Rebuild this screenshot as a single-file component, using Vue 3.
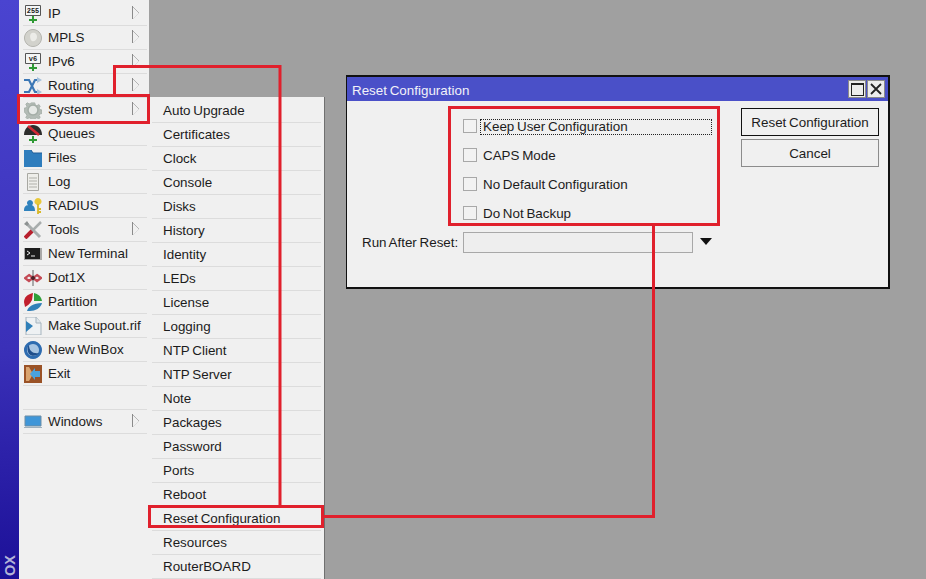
<script setup>
const p = (d, fill = 'none', stroke = 'none', sw = 1) => ({ tag: 'path', attrs: { d, fill, stroke, 'stroke-width': sw } })
const t = (text, x, y) => ({ tag: 'text', text, attrs: { x, y, 'font-size': 7, 'font-weight': 700, 'font-family': 'Liberation Mono, monospace', fill: '#222', 'text-anchor': 'middle' } })
const plus = [p('M9 11v7M5 15h8', 'none', '#2f9a35', 2)]
const monitor = [p('M1.5 .5h15v10h-15z', '#f4f6f6', '#555')]
const gear = 'M7 1h4l.5 2.4 1.8.8 2.2-1.3 1.6 1.6-1.3 2.2.8 1.8 2.4.5v3.9l-2.4.6-.8 1.8 1.3 2-1.6 1.6-2.2-1.2-1.8.7-.5 2.1H7l-.5-2.1-1.8-.7-2.2 1.2-1.6-1.6 1.3-2-.8-1.8L-1 11V7l2.4-.5.8-1.8L.9 2.5l1.6-1.6 2.2 1.3 1.8-.8z'

const menu = [
  { label: 'IP', sub: true, icon: [...monitor, t('255', 9, 8), ...plus] },
  { label: 'MPLS', sub: true, icon: [p('M9 .5a8.500 8.500 0 1 1-.01 0z', '#d2d2cc', '#b4b4ae'), p('M8 4c3-1 5 1 5 4s-3 5-5 4-3-7 0-8z', '#ecece8')] },
  { label: 'IPv6', sub: true, icon: [...monitor, t('v6', 9, 8), ...plus] },
  { label: 'Routing', sub: true, icon: [p('M0 3h5l6 12h3M0 15h5l6-12h3', 'none', '#3b77b5', 2.2), p('M13 0l5 3-5 3zM13 12l5 3-5 3z', '#a6c2dc')] },
  { label: 'System', sub: true, icon: [{ tag: 'g', attrs: { transform: 'translate(1 1) scale(.89)' }, kids: [p(gear, '#b4bcb6', '#a4aea7')] }, p('M9 4a5 5 0 1 1-.01 0z', '#e6e9e6', '#a4aea7', 1.5)] },
  { label: 'Queues', icon: [p('M0 10C0 4 4 0 9 0s9 4 9 10z', '#2c2c2c'), p('M4 1l11 9', 'none', '#d32a35', 2.6), p('M9 11v7M5 15h8', 'none', '#2f9a35', 2)] },
  { label: 'Files', icon: [p('M0 1h7l2 3h9v14H0z', '#2e7dbd'), p('M7 1l2 3h9', 'none', '#1f5f99')] },
  { label: 'Log', icon: [p('M3.500 .5h11v17h-11z', '#eeeeea', '#a8a8a2'), p('M5 5h8M5 8h8M5 11h8M5 14h8', 'none', '#b0b0aa')] },
  { label: 'RADIUS', icon: [p('M6 3a3 3 0 1 1-.01 0zM0 14c0-5 2-6 5.500-6s5.500 1 5.500 6z', '#2f82bd'), p('M14 1a3.500 3.500 0 1 1-.01 0z', '#e8c838'), p('M14 7v10M14 12h3M14 15h3', 'none', '#d8b828', 1.8)] },
  { label: 'Tools', sub: true, icon: [p('M2 2l14 14', 'none', '#a8adad', 3), p('M17 1L7 11', 'none', '#a8adad', 2.5), p('M8 10L1 17', 'none', '#b8202e', 4), p('M0 3l3-3 2 3-2 2z', '#8d9292')] },
  { label: 'New Terminal', icon: [p('M0 3h18v12H0z', '#a9a9a9'), p('M1 3h15v11H1z', '#1d1d1d'), p('M3 6l3 2-3 2M7 11h4', 'none', '#eee', 1)] },
  { label: 'Dot1X', icon: [p('M9 1v16', 'none', '#8a8a8a', 1.4), p('M5 6l4 3-4 3-4-3zM13 6l4 3-4 3-4-3z', 'none', '#c44a55', 2.2), p('M9 6.500l2.500 2.500-2.500 2.500-2.500-2.500z', '#4a2228')] },
  { label: 'Partition', icon: [p('M0 9C0 4 4 1 9 0L8 7C6 11 3 13 1 14z', '#c11f2c'), p('M10 0c4 1 7 3 8 8h-8z', '#31a03a'), p('M18 10c-1 5-7 8-12 8H3c1-4 6-8 15-8z', '#2f7fb8')] },
  { label: 'Make Supout.rif', icon: [p('M2 0h10l5 6v12H2z', '#eef1f3', '#a5b3bd'), p('M2 4l7 5-7 6z', '#2f7fb8'), p('M12 0v6h5', '#dfe6ea', '#a5b3bd')] },
  { label: 'New WinBox', icon: [p('M9 0a9 9 0 1 1-.01 0z', '#2e6cb0'), p('M9 3a6 6 0 1 1-.01 0z', '#a8c5e2'), p('M5 4c0 6 4 9 10 8-2 3-7 4-10 1-2-3-2-7 0-9z', '#1f4f8c')] },
  { label: 'Exit', icon: [p('M0 0h18v18H0z', '#9a5226'), p('M2 2l5 7-5 7M2 2h3l4 7-4 7H2', '#d9a36e'), p('M16 6H11V3L6 9l5 6v-3h5z', '#4aa3de')] },
  { blank: true },
  { label: 'Windows', sub: true, icon: [p('M1 3h16v10H1z', '#3f96d8', '#6d8da5'), p('M0 14h18v1H0z', '#9fb0bc')] },
]
const system = ['Auto Upgrade', 'Certificates', 'Clock', 'Console', 'Disks', 'History', 'Identity', 'LEDs', 'License', 'Logging', 'NTP Client', 'NTP Server', 'Note', 'Packages', 'Password', 'Ports', 'Reboot', 'Reset Configuration', 'Resources', 'RouterBOARD']
const options = ['Keep User Configuration', 'CAPS Mode', 'No Default Configuration', 'Do Not Backup']
</script>

<template>
  <div class="desk">
    <div class="brand"><span class="brand-text">OX</span></div>
    <nav class="menu">
      <div v-for="(m, i) in menu" :key="i" class="row">
        <template v-if="!m.blank">
          <svg class="icon" viewBox="0 0 18 18" width="18" height="18">
            <component :is="s.tag" v-for="(s, j) in m.icon" :key="j" v-bind="s.attrs">
              <template v-if="s.text">{{ s.text }}</template>
              <template v-if="s.kids"><path v-for="(k, n) in s.kids" :key="n" v-bind="k.attrs" /></template>
            </component>
          </svg>
          <span class="label">{{ m.label }}</span>
          <svg v-if="m.sub" class="arrow" viewBox="0 0 8 14" width="8" height="14">
            <path d="M.5 0v13" stroke="#8a8a8a" fill="none" />
            <path d="M1 1l6 6" stroke="#b4b4b4" fill="none" />
            <path d="M7 7l-6 6" stroke="#dddddd" fill="none" />
          </svg>
        </template>
      </div>
    </nav>
    <nav class="submenu">
      <div v-for="s in system" :key="s" class="subrow">{{ s }}</div>
    </nav>

    <section class="dialog">
      <header class="titlebar">
        <span class="title">Reset Configuration</span>
        <div class="winbtns">
          <button class="winbtn"><span class="maxglyph"></span></button>
          <button class="winbtn">
            <svg viewBox="0 0 14 14" width="14" height="14"><path d="M2 2l10 10M12 2L2 12" stroke="#222" stroke-width="1.800" fill="none" /></svg>
          </button>
        </div>
      </header>
      <div class="body">
        <div class="form">
          <label v-for="(o, i) in options" :key="o" class="check">
            <span class="box"></span>
            <span class="check-label" :class="{ focus: i === 0 }">{{ o }}</span>
          </label>
          <div class="run">
            <span class="run-label">Run After Reset:</span>
            <span class="field"></span>
            <span class="caret"></span>
          </div>
        </div>
        <div class="actions">
          <button class="btn primary">Reset Configuration</button>
          <button class="btn">Cancel</button>
        </div>
      </div>
    </section>

    <svg class="marks" width="926" height="579" viewBox="0 0 926 579">
      <g fill="none" stroke="#e0202c" stroke-width="3">
        <rect x="18.500" y="95.500" width="130" height="27" />
        <path d="M114.500 94V66.500H280V505" />
        <rect x="149.500" y="506.500" width="173" height="20" />
        <path d="M324 516.500H653.500V225" />
        <rect x="449.500" y="107.500" width="269" height="117" />
      </g>
    </svg>
  </div>
</template>

<style>
html, body { margin: 0; background: #a0a0a0; }
</style>

<style scoped>
.desk {
  position: relative;
  display: flex;
  align-items: flex-start;
  width: 926px;
  height: 579px;
  overflow: hidden;
  background: #a0a0a0;
  font: 13.4px/24px "Liberation Sans", Arial, sans-serif;
  word-spacing: -1px;
  color: #1c1c1c;
}
.brand {
  position: relative;
  width: 19px;
  height: 579px;
  flex: none;
  background: linear-gradient(#4a44d0, #3a30b8 60%, #1c1098);
}
.brand-text {
  position: absolute;
  left: 3px;
  top: 555px;
  writing-mode: vertical-rl;
  transform: rotate(180deg);
  font-size: 14.5px;
  line-height: 15px;
  font-weight: 700;
  color: #b4b4d8;
}
.menu {
  width: 130px;
  height: 579px;
  flex: none;
  padding-top: 2px;
  box-sizing: border-box;
  background: #f0f0f0;
}
.row {
  display: flex;
  align-items: center;
  height: 23px;
  padding-left: 1px;
  margin: 0 2px 0 4px;
  border-bottom: 1px solid #dcdcdc;
  position: relative;
}
.icon { flex: none; margin-right: 6px; }
.label { white-space: nowrap; }
.arrow { position: absolute; left: 109px; top: 4px; }
.submenu {
  width: 176px;
  flex: none;
  margin-top: 97px;
  padding: 2px 3px 0 3px;
  box-sizing: border-box;
  background: #f0f0f0;
  border-right: 1px solid #707070;
}
.subrow {
  height: 23px;
  line-height: 24px;
  padding-left: 11px;
  border-bottom: 1px solid #dcdcdc;
  white-space: nowrap;
}
.dialog {
  position: absolute;
  left: 346px;
  top: 75px;
  width: 544px;
  height: 214px;
  box-sizing: border-box;
  border: 1px solid #111;
  border-width: 2px 2px 2px 1px;
  background: #f0f0f0;
}
.titlebar {
  display: flex;
  align-items: center;
  justify-content: space-between;
  height: 24px;
  padding: 0 3px 0 5px;
  background: #4a50c8;
  color: #f2f2f8;
}
.title { padding-top: 3px; }
.winbtns { display: flex; gap: 1px; }
.winbtn {
  display: flex;
  align-items: center;
  justify-content: center;
  width: 18px;
  height: 18px;
  padding: 0;
  background: #ececec;
  border: 1px solid #8a8a8a;
}
.maxglyph {
  width: 11px;
  height: 10px;
  border: 1px solid #222;
  border-top-width: 2px;
}
.body { display: flex; }
.form { width: 394px; flex: none; padding-top: 11px; box-sizing: border-box; }
.check {
  display: flex;
  align-items: center;
  height: 29px;
  padding-left: 116px;
}
.box {
  width: 12px;
  height: 12px;
  flex: none;
  margin: -1px 3px 0 0;
  border: 1px solid #a8a8a8;
  background: #f2f2f2;
}
.check-label {
  padding-left: 2px;
  line-height: 14px;
  border: 1px solid transparent;
}
.focus {
  width: 228px;
  border: 1px dotted #222;
}
.run { display: flex; align-items: center; margin-top: 4px; height: 21px; padding-left: 15px; }
.run-label { width: 101px; white-space: nowrap; }
.field {
  width: 228px;
  height: 19px;
  border: 1px solid #a8a8a8;
  background: #eeeeee;
}
.caret {
  width: 0;
  height: 0;
  margin: -2px 0 0 7px;
  border: 6px solid transparent;
  border-top: 7px solid #111;
  border-bottom: 0;
}
.actions { display: flex; flex-direction: column; gap: 3px; padding-top: 7px; }
.btn {
  width: 138px;
  height: 28px;
  padding: 2px 0 0;
  background: #f0f0f0;
  border: 1px solid #8c8c8c;
  font: inherit;
  word-spacing: inherit;
  color: inherit;
}
.primary { border-color: #111; }
.marks { position: absolute; left: 0; top: 0; pointer-events: none; }
</style>
